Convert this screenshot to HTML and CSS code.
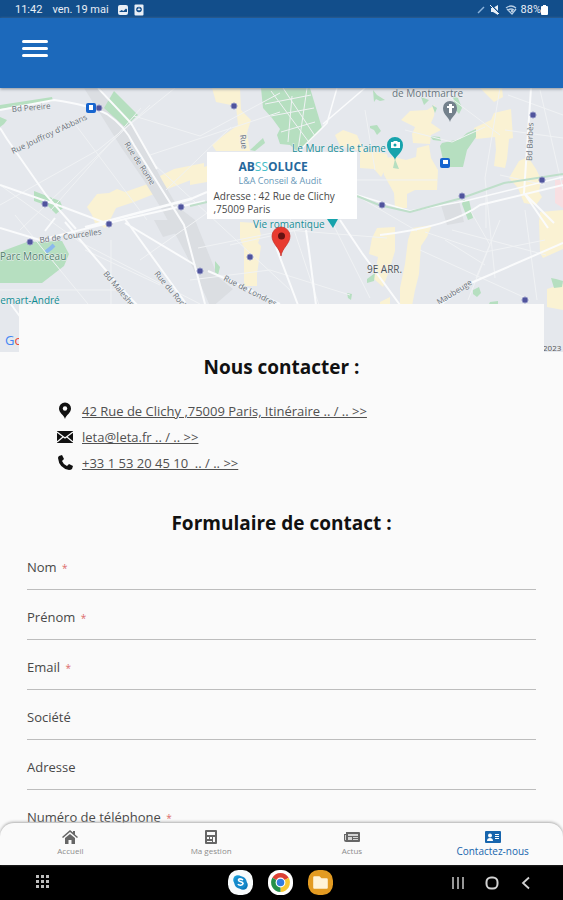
FILE: index.html
```html
<!DOCTYPE html>
<html lang="fr">
<head>
<meta charset="utf-8">
<meta name="viewport" content="width=device-width, initial-scale=1">
<title>Contactez-nous</title>
<link rel="stylesheet" href="styles.css">
</head>
<body>
<div class="status-bar">
  <span>11:42</span>
  <span class="status-date">ven. 19 mai</span>
  <svg class="status-icon" viewBox="0 0 12 12" aria-hidden="true"><rect x="1" y="1" width="10" height="10" rx="2" fill="#e9eff6"/><path d="M2 8l2.500-2 2 1L9 4.500l1 1V8z" fill="#124e8b"/></svg>
  <svg class="status-icon" viewBox="0 0 12 12" aria-hidden="true"><rect x="1.500" y="0.500" width="9" height="11" rx="1" fill="#e9eff6"/><circle cx="6" cy="5.500" r="2.800" fill="#124e8b"/><path d="M6 3.500v3M4.500 5.500h3" stroke="#e9eff6"/></svg>
  <span class="status-space"></span>
  <svg class="status-icon" viewBox="0 0 12 12" aria-hidden="true"><path d="M5 9l6-6" stroke="#8db4dc" stroke-width="1.500"/></svg>
  <svg class="status-icon" viewBox="0 0 12 12" aria-hidden="true"><path d="M2 4h2l5-3v10L4 8H2z" fill="#e9eff6"/><path d="M2 1l9 9" stroke="#124e8b" stroke-width="1.500"/><path d="M1 1l9 9" stroke="#e9eff6"/></svg>
  <svg class="status-icon" viewBox="0 0 12 12" aria-hidden="true"><path d="M1 4q5-4 10 0M3 6q3-2 6 0M2 5l5 5 4-5" fill="none" stroke="#b9cfe5" stroke-width="1.300"/><circle cx="7" cy="7" r="1" fill="#e9eff6"/></svg>
  <span class="battery-level">88%</span>
  <svg class="battery" viewBox="0 0 7 12" aria-hidden="true"><path d="M2 1h3v1h1q1 0 1 1v7q0 1-1 1H1q-1 0-1-1V3q0-1 1-1h1z" fill="#fff"/></svg>
</div>
<header class="app-bar">
  <button class="menu-button" type="button" aria-label="Menu"><span></span><span></span><span></span></button>
</header>
<main class="page">
  <section class="map" aria-label="Plan d'accès">
    <svg class="map-canvas" viewBox="0 88 563 264" preserveAspectRatio="xMidYMid slice">
      <rect y="88" width="563" height="264" fill="#e5e8ed"/>
      <g fill="#faf2d3">
        <path d="M87 207l10-13 12-1 8-4 8 3 20-7 15-9 14-7 30-6v12l-34 13-16 6-20 8-18 6-7 14-14 1-3-8z"/>
        <path d="M212 88h28l1 22 10 10-4 13 3 18h-34l-4-6 12-10 14-10-2-19-20-4z"/>
        <path d="M190 172l17-6v16l-17 3z"/>
        <path d="M96 220h14l3 5-9 3z"/>
        <path d="M240 222l18 1 3 12-3 8 3 3-4 28v12h-13v-38l-4-9z"/>
        <path d="M335 135l8-5 14 5 6 14 24 5 2 10-8 13-7-8-14-1v-17l-20-5z"/>
        <path d="M401 120l9-9 17-1 8-5-1 11-3 7 10 7-10 5-1 9-17-1-1-9 3-7z"/>
        <path d="M382 158l12-1 12 3 10-3 1-9 12-3 2 13 7 12-1 20h-22l-8 4v14h-12l-1-15-10-18z"/>
        <path d="M474 128l17-8 3-7 17-4 2 29-4 1-2 20-2 9-11-2 2-16-1-13-19 2z"/>
        <path d="M480 88h22l1 9-9 5z"/>
        <path d="M519 161l9-4 8 12 5 10-2 13 3 5-6 8-12-2-6-15-9-10z"/>
        <path d="M539 220h24v29l-20 9-3-5z"/>
        <path d="M547 289l16-5v26l-16-3z"/>
        <path d="M412 228l20-3-5 12-6 9-2 28-4 16-3 16h-12v-18l5-24 3-24z"/>
        <path d="M377 228l18-1v24l-6 20-6 16-9-8 4-22-9-3 3-16z"/>
        <path d="M380 302l10-5v8h-10zM540 212l23-2v15h-24z"/>
      </g>
      <path d="M555 180h8v28l-8-5z" fill="#f8dfe2"/>
      <g fill="#dbdee2">
        <path d="M84 88h16l14 17 22 26 26 49 15 26 18 14 23 57 15 12-22 19-18-40-15-29-17-31-18-29-22-32z"/>
        <path d="M154 220h16l7 13-14 4zM441 205l18-4 5 21-17 3z"/>
      </g>
      <g fill="#b6dfc0">
        <path d="M114 91l24 24-13 12-21-19z"/>
        <path d="M0 105l52-8 1 4-53 8zM0 117l7 3-3 4-4 3z"/>
        <path d="M34 191l26 10 3 7-7 6-8-8-14-5z"/>
        <path d="M0 252l27-10 35-1 7 13-5 12-22 17H0z"/>
        <path d="M261 88h49l12 40-9 10-15 14-8-7-10-1-3-9 3-6-8-11-9-10z"/>
        <path d="M250 150l13-12 2 5-10 8z"/>
        <path d="M442 143l18-4 7-6 9-4v8l-9 13-4 17h-20v-7l-3-14z"/>
        <path d="M430 136l10 1 1 4-8-1zM370 126l7-1 4 6-4 4-3-5-4-2zM373 90l4 5 8 5-5 1-4-2-2 3z"/>
        <path d="M463 200h6l4 18-5 2-6-16z"/>
        <path d="M395 159l4 10-6-1zM453 96l5 2 4 10-3 6-4-5zM421 97l8 3-5 5zM432 105l5 3-2 5z"/>
        <path d="M367 279l8-6-1 8-7 2zM347 293l5 1-1 6-3-2zM215 261l5 6-2 8-3-3zM473 290l6-3 2 6-4 4-4-3zM490 302l8-1v3h-9z"/>
        <path d="M551 278l5 1 7 2-1 6-8 1z"/>
      </g>
      <g class="minor-roads">
        <path d="M0 205L98 150 175 88M0 185l80 57 120 62M51 210l90-102M20 230l130-125M72 120l75 100M134 116l66 20 80-43M150 155l130-43M166 190l65-63M140 260l114-80M0 290h126M111 240v65M15 215l73 89M85 250l75 35M155 165l135 125"/>
        <path d="M198 248l89-18 100 8M190 280l80-10 80 25M230 245l90-20M290 218l29 87M330 218l40 80M357 196l60 35M357 180h80M365 110l10 60M405 130l47 12 33-15M440 90l60 45M500 88l-15 90 10 100"/>
        <path d="M420 250l110 50M425 232l60 20 60-12M470 210l20 35-22 55M445 240l40 25M500 220l-24 58M452 230l94 25M486 195v33M500 175l45 10M540 90l23 100M508 95l55 20M505 130l58 8M525 210l12 90"/>
        <path d="M271 91l37 50M283 88l32 48M265 104l46-9M271 116l43-8M281 132l34-10M298 150l9-62M288 142l4-46"/>
      </g>
      <g class="roads">
        <path d="M0 110l54-10q35 5 53 14 18 12 27 31l50 80 21 79"/>
        <path d="M0 128l7 11 39 56 30 34M0 185l63 22 40 15 90-24 14-6M85 227l107-28M0 228l40 12 85-21 80-18"/>
        <path d="M65 222l55 65 18 19M125 219l62 86M125 223l70 42M55 218l-10 13M10 303l14 19M98 88l33 35 26 46"/>
        <path d="M276 247l22 58M306 230l3 21 7 54M340 220l22 33 38 52M280 304l-49-23-23-10"/>
        <path d="M337 88l-10 35-30 30M323 124l42-36M357 195l53 16 55-10 98-24" stroke-width="1.500"/>
        <path d="M531 88l-4 60-3 45 24 35M526 195l28 28M380 235q70-8 100-30l83-20M563 243l-92 40-31 22"/>
      </g>
      <g fill="none" stroke="#bfdfca" stroke-width="2"><path d="M190 206l17-4M357 196l22 9 31 7 52-14 42-15 59-9"/></g>
      <g class="stations">
        <circle cx="99" cy="108" r="3"/><circle cx="45" cy="204" r="3"/><circle cx="181" cy="207" r="3"/><circle cx="109" cy="224" r="3"/><circle cx="30" cy="242" r="3"/><circle cx="234" cy="106" r="3"/><circle cx="250" cy="257" r="3"/><circle cx="200" cy="271" r="3"/><circle cx="382" cy="205" r="3"/><circle cx="462" cy="196" r="3"/><circle cx="533" cy="115" r="3"/><circle cx="542" cy="180" r="3"/><circle cx="525" cy="300" r="3"/>
      </g>
      <g fill="#1765cf"><rect x="86" y="103" width="10" height="10" rx="2"/><rect x="440" y="158" width="10" height="10" rx="2"/></g>
      <g fill="#fff"><rect x="89" y="105" width="4" height="5"/><rect x="443" y="160" width="5" height="4"/></g>
      <path d="M46 252l5-4 3-3" stroke="#8bb9ed" stroke-width="4" fill="none"/>
      <g class="street-names">
        <text transform="translate(12 112) rotate(-5)">Bd Pereire</text>
        <text transform="translate(13 154) rotate(-25)">Rue Jouffroy d'Abbans</text>
        <text transform="translate(124 144) rotate(57)">Rue de Rome</text>
        <text transform="translate(40 243) rotate(-8)">Bd de Courcelles</text>
        <text transform="translate(103 274) rotate(50)">Bd Malesherbes</text>
        <text transform="translate(154 274) rotate(50)">Rue du Rocher</text>
        <text transform="translate(223 280) rotate(27)">Rue de Londres</text>
        <text transform="translate(240 135) rotate(83)">Rue</text>
        <text transform="translate(532 161) rotate(-88)">Bd Barbès</text>
        <text transform="translate(439 305) rotate(-32)">Maubeuge</text>
      </g>
      <g class="places">
        <text x="392" y="97" fill="#66737d">de Montmartre</text>
        <text x="367" y="273" fill="#4d5358">9E ARR.</text>
        <text x="0" y="260" fill="#4d8069">Parc Monceau</text>
        <text x="-6" y="304" fill="#0f8a91">nemart-André</text>
        <text x="292" y="152" fill="#178d96">Le Mur des Je t'aime</text>
        <text x="253" y="228" fill="#178d96">Vie romantique</text>
      </g>
      <path d="M395 160c-1-5-8-7-8-15a8 8 0 0 1 16 0c0 8-7 10-8 15z" fill="#17a3ac"/><path d="M391 142h2l1-1h3l1 1h2v6h-9z" fill="#fff"/><circle cx="395" cy="145" r="1.500" fill="#17a3ac"/>
      <path d="M450 122c-1-5-7-7-7-14a7 7 0 0 1 14 0c0 7-6 9-7 14z" fill="#74818c"/><path d="M449 104h3v2h2v2h-2v5h-3v-5h-2v-2h2z" fill="#fff"/>
      <path d="M327 219h11l-5 9z" fill="#17a3ac"/>
      <path d="M281 256c-1-8-9-12-9-20a9 9 0 0 1 18 0c0 8-8 12-9 20z" fill="#e83b30" stroke="#c42c25" stroke-width=".7"/><circle cx="281.500" cy="236" r="3.500" fill="#641212"/>
      <text class="google" x="5" y="345"><tspan fill="#4285f4">G</tspan><tspan fill="#ea4335">o</tspan></text>
      <text class="copyright" x="543" y="351">2023</text>
    </svg>
    <div class="info-window">
      <div class="brand"><strong>AB<span>SS</span>OLUCE</strong><small>L&amp;A Conseil &amp; Audit</small></div>
      <p>Adresse : 42 Rue de Clichy ,75009 Paris</p>
    </div>
  </section>
  <section class="sheet">
    <h1>Nous contacter :</h1>
    <ul class="contacts">
      <li><svg viewBox="0 0 18 18" aria-hidden="true"><path d="M9 17C8 13 3 11 3 6.500a6 6 0 0 1 12 0C15 11 10 13 9 17z"/><circle cx="9" cy="6.500" r="2.200" fill="#fafafa"/></svg><a href="#itineraire">42 Rue de Clichy ,75009 Paris, Itinéraire .. / .. &gt;&gt;</a></li>
      <li><svg viewBox="0 0 18 18" aria-hidden="true"><rect x="1" y="3" width="16" height="12"/><path d="M1 4l8 6 8-6M1 14l6-5M17 14l-6-5" fill="none" stroke="#fafafa" stroke-width="1.200"/></svg><a href="mailto:leta@leta.fr">leta@leta.fr .. / .. &gt;&gt;</a></li>
      <li><svg viewBox="0 0 18 18" aria-hidden="true"><path d="M3 2l3-1 2 4-2 2q1 3 5 5l2-2 4 2-1 3q-1 1-3 1Q3 14 2 4q0-1 1-2z"/></svg><a href="tel:+33153204510">+33 1 53 20 45 10&nbsp; .. / .. &gt;&gt;</a></li>
    </ul>
    <h2>Formulaire de contact :</h2>
    <form>
      <div class="field"><label for="nom">Nom <b>*</b></label><input id="nom" type="text" required></div>
      <div class="field"><label for="prenom">Prénom <b>*</b></label><input id="prenom" type="text" required></div>
      <div class="field"><label for="email">Email <b>*</b></label><input id="email" type="email" required></div>
      <div class="field"><label for="societe">Société</label><input id="societe" type="text"></div>
      <div class="field"><label for="adresse">Adresse</label><input id="adresse" type="text"></div>
      <div class="field"><label for="telephone">Numéro de téléphone <b>*</b></label><input id="telephone" type="tel" required></div>
    </form>
  </section>
</main>
<nav class="tabs">
  <a href="#accueil"><svg viewBox="0 0 16 16" aria-hidden="true"><path d="M0 8l8-7 3 2.600V2h2v3.500L16 8l-1 1-7-6-7 6z"/><path d="M3 9l5-4 5 4v6H9.500v-4h-3v4H3z"/></svg>Accueil</a>
  <a href="#gestion"><svg viewBox="0 0 16 16" aria-hidden="true"><rect x="2" y="1" width="12" height="14" rx="1"/><path d="M4 3h8v3H4zM4 8h2v2H4zM7 8h2v2H7zM4 12h5v1H4zM10 8h2v5h-2z" fill="#fafafa"/></svg>Ma gestion</a>
  <a href="#actus"><svg viewBox="0 0 16 16" aria-hidden="true"><path d="M2 3h13q1 0 1 1v8q0 1-1 1H2q-2 0-2-2V5h2z"/><path d="M4 5h10v2H4zM4 8h4v3H4zM9 8h5v1H9zM9 10h5v1H9zM1 6h1v5H1z" fill="#d5d5d5"/></svg>Actus</a>
  <a class="active" href="#contact" aria-current="page"><svg viewBox="0 0 16 16" aria-hidden="true"><rect y="2" width="16" height="12" rx="1"/><circle cx="5" cy="6.500" r="2" fill="#fff"/><path d="M2 12q0-3 3-3t3 3zM10 5h4v1h-4zM10 7h4v1h-4zM10 9h4v1h-4z" fill="#fff"/></svg>Contactez-nous</a>
</nav>
<div class="system-bar">
  <div class="system-left"><button type="button" aria-label="Applications"><svg viewBox="0 0 14 14"><path d="M1 1h3v3H1zM6 1h3v3H6zM11 1h3v3h-3zM1 6h3v3H1zM6 6h3v3H6zM11 6h3v3h-3zM1 11h3v3H1zM6 11h3v3H6zM11 11h3v3h-3z" fill="#bdbdbd"/></svg></button></div>
  <div class="dock">
    <button type="button" aria-label="Skype"><svg viewBox="0 0 24 24"><rect width="24" height="24" rx="10" fill="#f8fbfc"/><circle cx="9.500" cy="9.500" r="4.500" fill="#159bd7"/><circle cx="14.500" cy="14.500" r="4.500" fill="#0a78ba"/><circle cx="12" cy="12" r="6" fill="#168acb"/><path d="M14.500 9.500q-4-2-4.500 0c0 2 4.500 1.500 4.500 3.500-.5 2-4 2-5 .5" stroke="#fff" stroke-width="1.500" fill="none"/></svg></button>
    <button type="button" aria-label="Chrome"><svg viewBox="0 0 24 24"><rect width="24" height="24" rx="11" fill="#fff"/><path d="M12 12L4.200 7.500a9 9 0 0 1 15.600 0z" fill="#db4034"/><path d="M12 12l7.800-4.500A9 9 0 0 1 12 21z" fill="#f8c831"/><path d="M12 12v9A9 9 0 0 1 4.200 7.500z" fill="#23904a"/><circle cx="12" cy="12" r="4.700" fill="#fff"/><circle cx="12" cy="12" r="3.600" fill="#337ddf"/></svg></button>
    <button type="button" aria-label="Fichiers"><svg viewBox="0 0 24 24"><rect width="24" height="24" rx="10" fill="#e39b22"/><path d="M5 7q0-1 1-1h5l2 2h5q1 0 1 1v8q0 1-1 1H6q-1 0-1-1z" fill="#fff3d8"/></svg></button>
  </div>
  <div class="system-right">
    <button type="button" aria-label="Récents"><svg viewBox="0 0 14 14"><path d="M2 1v12M7 1v12M12 1v12" stroke="#c9c9c9" stroke-width="1.500"/></svg></button>
    <button type="button" aria-label="Accueil du système"><svg viewBox="0 0 14 14"><rect x="1.500" y="1.500" width="11" height="11" rx="4.500" fill="none" stroke="#d2d2d2" stroke-width="2"/></svg></button>
    <button type="button" aria-label="Retour"><svg viewBox="0 0 14 14"><path d="M10 1.500L4 7l6 5.500" fill="none" stroke="#d2d2d2" stroke-width="1.800"/></svg></button>
  </div>
</div>
</body>
</html>
```
FILE: styles.css
```css
* { box-sizing: border-box; }
body {
  margin: 0;
  height: 100vh;
  display: flex;
  flex-direction: column;
  overflow: hidden;
  background: #fafafa;
  color: #484848;
  font-family: "Open Sans", sans-serif;
  font-size: 13px;
}
svg { display: block; }
button { padding: 0; border: 0; background: none; }
.status-bar {
  flex: none;
  display: flex;
  align-items: center;
  gap: 4px;
  height: 18px;
  padding: 2px 15px 0;
  background: #124e8b;
  color: #e9eff6;
  font: 11px/16px Roboto, sans-serif;
}
.status-date { margin: 0 4px 0 6px; }
.status-icon { width: 12px; height: 12px; }
.status-space { flex: 1; }
.battery-level { margin-right: -4px; }
.battery { width: 7px; height: 12px; }
.app-bar {
  flex: none;
  display: flex;
  position: relative;
  z-index: 1;
  height: 70px;
  padding: 22px;
  background: #1c69bb;
  box-shadow: 0 1px 3px #8a9098;
}
.menu-button {
  display: flex;
  flex-direction: column;
  gap: 4px;
  width: 26px;
}
.menu-button span {
  width: 100%;
  height: 3px;
  border-radius: 2px;
  background: #fff;
}
.page { flex: 1; min-height: 0; overflow: hidden; }
.map { position: relative; }
.map-canvas { width: 100%; height: 264px; }
.minor-roads { fill: none; stroke: #f0f2f4; stroke-width: 1; }
.roads { fill: none; stroke: #fafbfc; stroke-width: 2; }
.stations { fill: #50549d; stroke: #9296c5; stroke-width: 1; }
.street-names {
  fill: #697078;
  font-size: 8px;
  stroke: #eceff2;
  stroke-width: 1px;
  paint-order: stroke;
}
.places {
  font-size: 10px;
  stroke: #edf0f2;
  stroke-width: 1px;
  paint-order: stroke;
}
.google { font-size: 13px; }
.copyright { font-size: 8px; fill: #555; }
.info-window {
  position: absolute;
  top: 64px;
  left: 50%;
  width: 150px;
  padding: 8px 7px 3px;
  transform: translateX(-50%);
  background: #fff;
  font-size: 10px;
  line-height: 13px;
}
.info-window p { margin: 3px 0 0; }
.brand {
  display: flex;
  flex-direction: column;
  padding-left: 25px;
  color: #26689c;
}
.brand strong { font-size: 12px; line-height: 14px; }
.brand span { color: #45bdc7; font-weight: 400; }
.brand small { font-size: 9px; line-height: 13px; color: #6798b8; }
.sheet {
  position: relative;
  margin: -48px 19px 0;
  padding: 51px 8px 0;
  background: #fafafa;
}
h1, h2 {
  margin: 0;
  color: #111;
  font-size: 19px;
  line-height: 24px;
  text-align: center;
}
.contacts {
  margin: 19px 0 35px;
  padding: 0 0 0 29px;
  list-style: none;
}
.contacts li {
  display: flex;
  align-items: center;
  gap: 8px;
  height: 26px;
}
.contacts svg { width: 18px; height: 18px; fill: #111; }
.contacts a { color: #505050; text-underline-offset: 1px; }
form { padding-top: 5px; }
.field {
  display: flex;
  align-items: center;
  gap: 8px;
  height: 50px;
  padding-top: 4px;
  border-bottom: 1px solid #bdbdbd;
}
.field b { margin-left: 2px; color: #dc6b6b; font-size: 10px; font-weight: 400; }
.field input {
  flex: 1;
  min-width: 0;
  border: 0;
  outline: 0;
  background: none;
  font: inherit;
}
.tabs {
  flex: none;
  position: relative;
  display: grid;
  grid-template-columns: repeat(4, 1fr);
  height: 42px;
  border-radius: 14px 14px 0 0;
  background: #fafafa;
  box-shadow: 0 -1px 3px #aaa;
}
.tabs a {
  display: flex;
  flex-direction: column;
  align-items: center;
  padding-top: 6px;
  color: #8c8c8c;
  font-size: 8px;
  line-height: 12px;
  text-decoration: none;
}
.tabs svg { width: 16px; height: 16px; fill: #666; }
.tabs .active { color: #1765ad; font-size: 10px; }
.tabs .active svg { fill: #1765ad; }
.system-bar {
  flex: none;
  display: grid;
  grid-template-columns: 1fr auto 1fr;
  align-items: center;
  height: 35px;
  padding: 0 30px 0 28px;
  background: #000;
}
.system-bar svg { width: 14px; height: 14px; }
.system-left { padding-left: 7px; }
.dock { display: flex; gap: 15px; }
.dock svg { width: 25px; height: 25px; }
.system-right { display: flex; justify-content: flex-end; gap: 20px; }
```
